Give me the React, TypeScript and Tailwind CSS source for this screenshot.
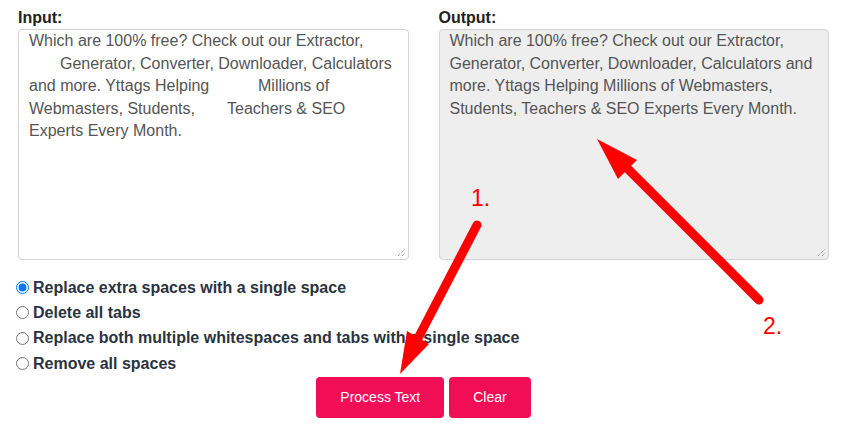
const Grip = () => (
  <svg
    className="absolute bottom-[2px] right-[2px]"
    width="9"
    height="9"
    viewBox="0 0 9 9"
  >
    <path d="M1 8 L8 1" stroke="#777" strokeWidth="1" strokeDasharray="1 1" />
    <path d="M5 8 L8 5" stroke="#777" strokeWidth="1" strokeDasharray="1 1" />
  </svg>
)

const options = [
  { id: "extra", label: "Replace extra spaces with a single space", checked: true },
  { id: "tabs", label: "Delete all tabs", checked: false },
  { id: "both", label: "Replace both multiple whitespaces and tabs with a single space", checked: false },
  { id: "all", label: "Remove all spaces", checked: false },
]

export default function App() {
  return (
    <div className="relative h-[428px] w-[847px] overflow-hidden bg-white font-['Liberation_Sans',Arial,sans-serif]">
      <div className="grid grid-cols-2 gap-[30px] px-[18px] pt-[6px]">
        {/* input */}
        <div>
          <div className="text-[16px] font-bold leading-[23px] text-[#222]">Input:</div>
          <div className="relative h-[231px] overflow-hidden rounded-[4px] border border-[#d3d3d3] bg-white px-[10px] text-[16px] leading-[22.5px] text-[#555]">
            <div className="whitespace-nowrap">
              <div>Which are 100% free? Check out our Extractor,</div>
              <div className="pl-[31px]">Generator, Converter, Downloader, Calculators</div>
              <div>
                <span className="inline-block w-[229px]">and more. Yttags Helping</span>Millions of
              </div>
              <div>
                <span className="inline-block w-[198px]">Webmasters, Students,</span>Teachers &amp; SEO
              </div>
              <div>Experts Every Month.</div>
            </div>
            <Grip />
          </div>
        </div>

        {/* output */}
        <div>
          <div className="text-[16px] font-bold leading-[23px] text-[#222]">Output:</div>
          <div className="relative h-[231px] overflow-hidden rounded-[4px] border border-[#d3d3d3] bg-[#eeeeee] px-[10px] text-[16px] leading-[22.5px] text-[#555]">
            <div className="whitespace-nowrap">
              <div>Which are 100% free? Check out our Extractor,</div>
              <div>Generator, Converter, Downloader, Calculators and</div>
              <div>more. Yttags Helping Millions of Webmasters,</div>
              <div>Students, Teachers &amp; SEO Experts Every Month.</div>
            </div>
            <Grip />
          </div>
        </div>
      </div>

      {/* options */}
      <div className="mt-[15px] flex flex-col pl-[16px]">
        {options.map((o) => (
          <label
            key={o.id}
            className="flex h-[25.3px] items-center gap-[4px] text-[16px] font-bold text-[#2b3340]"
          >
            <input
              type="radio"
              name="mode"
              defaultChecked={o.checked}
              className="m-0 h-[13px] w-[13px]"
            />
            {o.label}
          </label>
        ))}
      </div>

      {/* buttons */}
      <div className="mt-[1px] flex justify-center gap-[5px]">
        <button className="h-[41px] rounded-[4px] bg-[#f20d57] px-[24px] text-[14px] text-white">
          Process Text
        </button>
        <button className="h-[41px] rounded-[4px] bg-[#f20d57] px-[24px] text-[14px] text-white">
          Clear
        </button>
      </div>

      {/* annotation arrows */}
      <svg className="pointer-events-none absolute left-0 top-0" width="847" height="428">
        <line x1="477" y1="225" x2="414" y2="346" stroke="#ff0000" strokeWidth="9" strokeLinecap="round" />
        <polygon points="400,374 407,331 429,344" fill="#ff0000" />
        <line x1="759" y1="300" x2="623" y2="164" stroke="#ff0000" strokeWidth="9" strokeLinecap="round" />
        <polygon points="597,139 618,179 637,160" fill="#ff0000" />
      </svg>
      <div className="absolute left-[471px] top-[184px] text-[23px] leading-[28px] text-[#ff0000]">1.</div>
      <div className="absolute left-[763px] top-[312px] text-[23px] leading-[28px] text-[#ff0000]">2.</div>
    </div>
  )
}
